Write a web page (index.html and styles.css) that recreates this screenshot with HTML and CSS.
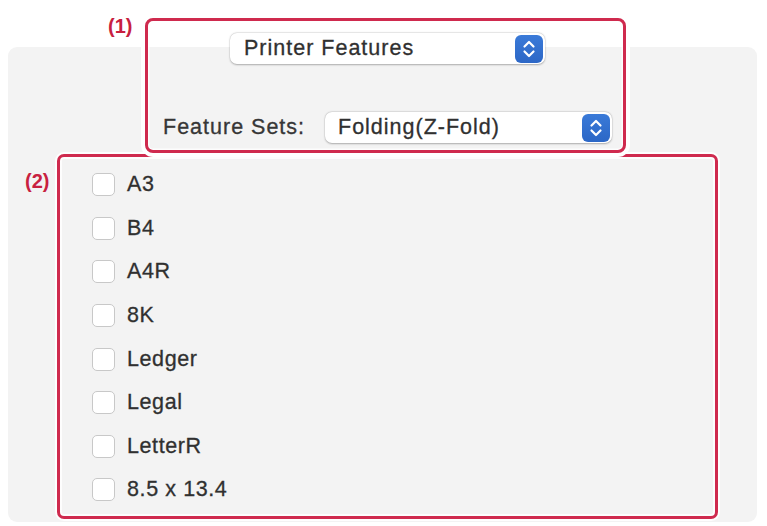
FILE: index.html
```html
<!DOCTYPE html>
<html>
<head>
<meta charset="utf-8">
<link rel="stylesheet" href="styles.css">
</head>
<body>
<div class="page">
  <div class="panel">
    <div class="popup popup-main">
      <span class="popup-text">Printer Features</span>
      <span class="stepper">
        <svg viewBox="0 0 28 28" width="28" height="28"><path d="M9.5 11.5 L14 7 L18.5 11.5 M9.5 16.5 L14 21 L18.5 16.5" fill="none" stroke="#fff" stroke-width="2.2" stroke-linecap="round" stroke-linejoin="round"/></svg>
      </span>
    </div>
    <div class="feature-row">
      <span class="feature-label">Feature Sets:</span>
      <div class="popup popup-sets">
        <span class="popup-text">Folding(Z-Fold)</span>
        <span class="stepper">
          <svg viewBox="0 0 28 28" width="28" height="28"><path d="M9.5 11.5 L14 7 L18.5 11.5 M9.5 16.5 L14 21 L18.5 16.5" fill="none" stroke="#fff" stroke-width="2.2" stroke-linecap="round" stroke-linejoin="round"/></svg>
        </span>
      </div>
    </div>
    <ul class="list">
      <li class="row"><span class="box"></span><span class="label">A3</span></li>
      <li class="row"><span class="box"></span><span class="label">B4</span></li>
      <li class="row"><span class="box"></span><span class="label">A4R</span></li>
      <li class="row"><span class="box"></span><span class="label">8K</span></li>
      <li class="row"><span class="box"></span><span class="label">Ledger</span></li>
      <li class="row"><span class="box"></span><span class="label">Legal</span></li>
      <li class="row"><span class="box"></span><span class="label">LetterR</span></li>
      <li class="row"><span class="box"></span><span class="label">8.5 x 13.4</span></li>
    </ul>
  </div>
  <div class="mark mark-2"></div>
  <div class="mark mark-1"></div>
  <span class="tag tag-1">(1)</span>
  <span class="tag tag-2">(2)</span>
</div>
</body>
</html>
```
FILE: styles.css
```css
html, body {
  margin: 0;
  padding: 0;
  background: #ffffff;
}
.page {
  position: relative;
  width: 767px;
  height: 526px;
  overflow: hidden;
  font-family: "Liberation Sans", Arial, sans-serif;
  font-size: 21.5px;
  letter-spacing: 1px;
  color: #303030;
  -webkit-text-stroke: 0.3px #303030;
}
.panel {
  margin: 47px 0 0 8px;
  width: 749px;
  height: 475px;
  box-sizing: border-box;
  background: #f3f3f3;
  border-radius: 9px;
  display: flex;
  flex-direction: column;
}
.popup {
  display: flex;
  align-items: center;
  justify-content: space-between;
  box-sizing: border-box;
  height: 31px;
  background: #ffffff;
  border-radius: 7px;
  box-shadow: 0 0.5px 2px rgba(0,0,0,0.28), 0 0 0 0.5px rgba(0,0,0,0.06);
  padding: 0 2px 0 14px;
}
.popup-main {
  margin: -14px 0 0 222px;
  width: 315px;
}
.popup-text {
  line-height: 31px;
}
.stepper {
  width: 28px;
  height: 28px;
  border-radius: 6px;
  background: linear-gradient(#3a7ad8, #2c67c6);
  display: flex;
  align-items: center;
  justify-content: center;
}
.stepper svg {
  display: block;
}
.feature-row {
  display: flex;
  align-items: center;
  margin: 48px 0 0 155px;
}
.feature-label {
  flex: none;
  width: 162px;
  color: #383838;
}
.popup-sets {
  width: 287px;
  padding-left: 13px;
}
.list {
  list-style: none;
  margin: 20px 0 0 0;
  padding: 0 0 0 84px;
}
.row {
  display: flex;
  align-items: center;
  height: 43.6px;
  gap: 12px;
}
.label {
  letter-spacing: 0.6px;
}
.box {
  width: 23px;
  height: 23px;
  box-sizing: border-box;
  border: 1.5px solid #c8c8c8;
  border-radius: 5px;
  background: #ffffff;
}
.mark {
  position: absolute;
  box-sizing: border-box;
  border: 3px solid #cf2a4e;
  box-shadow: 0 0 0 2px rgba(255,255,255,0.9), inset 0 0 0 2px rgba(255,255,255,0.8);
}
.mark-1 {
  left: 145px;
  top: 18px;
  width: 481px;
  height: 135px;
  border-radius: 8px;
  box-shadow: 0 0 0 4px #ffffff, inset 0 0 0 1.5px rgba(255,255,255,0.8);
}
.mark-2 {
  left: 57px;
  top: 154px;
  width: 661px;
  height: 365px;
  border-radius: 7px;
}
.tag {
  position: absolute;
  font-family: "Liberation Sans", Arial, sans-serif;
  font-weight: bold;
  font-size: 20px;
  letter-spacing: 0;
  -webkit-text-stroke: 0;
  color: #c8203f;
  line-height: 20px;
}
.tag-1 {
  left: 108px;
  top: 16px;
}
.tag-2 {
  left: 25px;
  top: 171px;
}
```
